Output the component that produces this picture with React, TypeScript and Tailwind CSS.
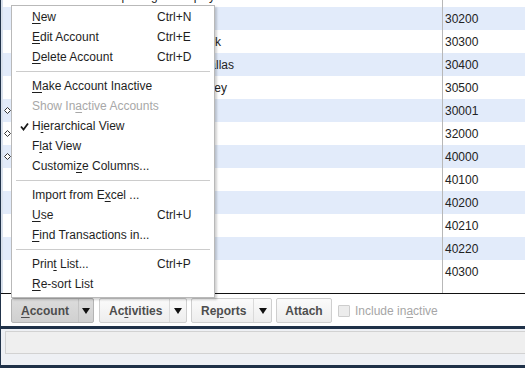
import React from "react";

type Item = {
  pre: string;
  u: string;
  post: string;
  shortcut?: string;
  disabled?: boolean;
  checked?: boolean;
};

const groups: Item[][] = [
  [
    { pre: "", u: "N", post: "ew", shortcut: "Ctrl+N" },
    { pre: "", u: "E", post: "dit Account", shortcut: "Ctrl+E" },
    { pre: "", u: "D", post: "elete Account", shortcut: "Ctrl+D" },
  ],
  [
    { pre: "", u: "M", post: "ake Account Inactive" },
    { pre: "Show In", u: "a", post: "ctive Accounts", disabled: true },
    { pre: "H", u: "i", post: "erarchical View", checked: true },
    { pre: "F", u: "l", post: "at View" },
    { pre: "Customi", u: "z", post: "e Columns..." },
  ],
  [
    { pre: "Import from E", u: "x", post: "cel ..." },
    { pre: "", u: "U", post: "se", shortcut: "Ctrl+U" },
    { pre: "", u: "F", post: "ind Transactions in..." },
  ],
  [
    { pre: "Prin", u: "t", post: " List...", shortcut: "Ctrl+P" },
    { pre: "", u: "R", post: "e-sort List" },
  ],
];

// rows behind the menu; only the tail of a name shows right of the menu
const rows = [
  { num: "", name: "Opening Bal Equity", end: 214, top: true },
  { num: "30200", name: "" },
  { num: "30300", name: "Mark", end: 220 },
  { num: "30400", name: "Dallas", end: 233 },
  { num: "30500", name: "Whitney", end: 226 },
  { num: "30001", name: "", mark: true },
  { num: "32000", name: "", mark: true },
  { num: "40000", name: "", mark: true },
  { num: "40100", name: "" },
  { num: "40200", name: "" },
  { num: "40210", name: "" },
  { num: "40220", name: "" },
  { num: "40300", name: "" },
];

const Check = () => (
  <svg width="9" height="9" viewBox="0 0 9 9" className="absolute left-[8px] top-[6px]">
    <path d="M1 4.5 L3.5 7.5 L8 1.5" fill="none" stroke="#1a1a1a" strokeWidth="1.8" />
  </svg>
);

const Diamond = () => (
  <svg width="7" height="7" viewBox="0 0 7 7" className="absolute left-[3px] top-[8px]">
    <path d="M3.5 0.5 L6.5 3.5 L3.5 6.5 L0.5 3.5 Z" fill="#fff" stroke="#333" strokeWidth="1" />
  </svg>
);

const Arrow = () => (
  <svg width="8" height="6" viewBox="0 0 8 6">
    <path d="M0 0 L8 0 L4 6 Z" fill="#111" />
  </svg>
);

function MenuRow({ item }: { item: Item }) {
  return (
    <div className={`relative h-[20px] flex items-center text-[12px] ${item.disabled ? "text-[#a8a8a8]" : "text-[#1e1e1e]"}`}>
      {item.checked && <Check />}
      <span className="pl-[20px] w-[145px] whitespace-nowrap">
        {item.pre}
        <span className="underline underline-offset-2">{item.u}</span>
        {item.post}
      </span>
      {item.shortcut && <span className="whitespace-nowrap">{item.shortcut}</span>}
    </div>
  );
}

function SplitButton({ pre, u, post, labelW, arrowW, pressed }: { pre: string; u: string; post: string; labelW: string; arrowW: string; pressed?: boolean }) {
  return (
    <div
      className={`flex h-[25px] rounded-[2px] border ${
        pressed ? "border-[#b4b4b4] bg-gradient-to-b from-[#dcdcdc] to-[#d0d0d0]" : "border-[#cfcfcf] bg-gradient-to-b from-[#fbfbfb] to-[#ededed]"
      }`}
    >
      <div className={`${labelW} flex items-center pl-[9px] text-[12px] font-bold text-[#4d4d4d]`}>
        {pre}
        <span className="underline underline-offset-2">{u}</span>
        {post}
      </div>
      <div className={`${arrowW} flex items-center justify-center border-l ${pressed ? "border-[#c4c4c4]" : "border-[#dadada]"}`}>
        <Arrow />
      </div>
    </div>
  );
}

export default function App() {
  return (
    <div className="relative w-[525px] h-[368px] overflow-hidden bg-white border-l border-[#22344b] font-['Liberation_Sans',Arial,sans-serif]">
      {/* account list */}
      <div className="h-[293px] overflow-hidden flex flex-col">
        <div className="flex flex-col -mt-[16px]">
          {rows.map((r, i) => (
            <div key={i} className={`relative flex h-[23px] shrink-0 ${i % 2 === 1 ? "bg-[#e2ebfa]" : "bg-white"}`}>
              <div className="w-[2px] bg-[#d9e1ec]" />
              {r.mark && <Diamond />}
              <div className="w-[439px] relative">
                {r.name && r.end && (
                  <span
                    className={`absolute whitespace-nowrap text-[12px] text-[#222] ${r.top ? "top-[3px]" : "top-[3px]"}`}
                    style={{ right: 441 - r.end }}
                  >
                    {r.name}
                  </span>
                )}
              </div>
              <div className="flex-1 border-l border-[#b8b8b8] pl-[2px] pt-[3px] text-[12px] text-[#222]">{r.num}</div>
            </div>
          ))}
        </div>
        <div className="flex flex-1">
          <div className="w-[2px] bg-[#d9e1ec]" />
          <div className="w-[439px]" />
          <div className="flex-1 border-l border-[#b8b8b8]" />
        </div>
      </div>
      <div className="h-[1px] bg-[#111]" />

      {/* button bar */}
      <div className="h-[32px] flex items-start pt-[4px] pl-[10px]">
        <SplitButton pre="" u="A" post="ccount" labelW="w-[66px]" arrowW="w-[15px]" pressed />
        <div className="ml-[5px]">
          <SplitButton pre="Ac" u="t" post="ivities" labelW="w-[69px]" arrowW="w-[17px]" />
        </div>
        <div className="ml-[4px]">
          <SplitButton pre="Re" u="p" post="orts" labelW="w-[61px]" arrowW="w-[18px]" />
        </div>
        <div className="ml-[4px] h-[25px] w-[56px] flex items-center justify-center rounded-[2px] border border-[#cfcfcf] bg-gradient-to-b from-[#fbfbfb] to-[#ededed] text-[12px] font-bold text-[#4d4d4d]">
          Attach
        </div>
        <div className="ml-[6px] flex items-center h-[25px] gap-[5px]">
          <div className="w-[12px] h-[12px] border border-[#cdcdcd] bg-[#ececec] rounded-[1px]" />
          <span className="text-[12px] text-[#a6a6a6]">
            Include in<span className="underline underline-offset-2">a</span>ctive
          </span>
        </div>
      </div>

      <div className="h-[3px] bg-[#1f3148]" />
      {/* status bar */}
      <div className="h-[36px] bg-[#eef0f4] pt-[2px] pl-[4px]">
        <div className="h-[23px] border border-r-0 border-[#d2d2d2] bg-[#efefef]" />
      </div>
      <div className="h-[3px] bg-[#1f3148]" />

      {/* dropdown menu */}
      <div className="absolute left-[10px] top-[5px] w-[204px] pt-[1px] pb-[3px] bg-white border border-[#b9b9b9] shadow-[2px_2px_2px_rgba(0,0,0,0.18)]">
        {groups.map((g, gi) => (
          <div key={gi}>
            {gi > 0 && (
              <div className="h-[9px] flex items-center px-[4px]">
                <div className="h-[1px] w-full bg-[#cccccc]" />
              </div>
            )}
            {g.map((it, ii) => (
              <MenuRow key={ii} item={it} />
            ))}
          </div>
        ))}
      </div>
    </div>
  );
}
